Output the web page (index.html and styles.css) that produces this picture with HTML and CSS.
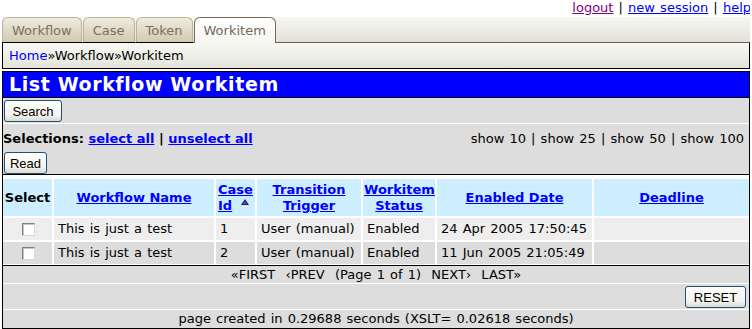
FILE: index.html
```html
<!DOCTYPE html>
<html>

<head>
    <meta charset="utf-8">
    <meta name="viewport" content="width=device-width, initial-scale=1.0">
    <title>List Workflow Workitem</title>
    <link rel="stylesheet" href="styles.css">
</head>

<body>

    <div class="toplinks">
        <a href="#" class="visited">logout</a> | <a href="#">new session</a> | <a href="#">help</a>
    </div>

    <div class="tabs">
        <a class="tab" href="#">Workflow</a>
        <a class="tab" href="#">Case</a>
        <a class="tab" href="#">Token</a>
        <a class="tab active" href="#">Workitem</a>
    </div>

    <div class="crumbs"><a href="#">Home</a>»Workflow»Workitem</div>

    <div class="main">
        <h1 class="title">List Workflow Workitem</h1>

        <div class="bar searchbar">
            <button class="btn btn-search">Search</button>
        </div>

        <div class="bar selectbar">
            <div class="selrow">
                <div class="sel"><b>Selections:</b> <a href="#">select all</a> <b>|</b> <a href="#">unselect all</a></div>
                <div class="show">show 10 | show 25 | show 50 | show 100</div>
            </div>
            <button class="btn btn-read">Read</button>
        </div>

        <div class="grid">
            <table>
                <colgroup>
                    <col style="width:49px">
                    <col style="width:160px">
                    <col style="width:39px">
                    <col style="width:104px">
                    <col style="width:72px">
                    <col style="width:155px">
                    <col style="width:155px">
                </colgroup>
                <tr>
                    <th class="plain">Select</th>
                    <th><a href="#">Workflow Name</a></th>
                    <th class="caseid"><a href="#">Case Id</a><svg class="sort" width="8" height="6" viewBox="0 0 8 6"><polygon points="4,0 8,6 0,6" fill="#1b1b70"/><polygon points="4,2 6,5 2,5" fill="#5a5aa8"/></svg></th>
                    <th><a href="#">Transition Trigger</a></th>
                    <th><a href="#">Workitem Status</a></th>
                    <th><a href="#">Enabled Date</a></th>
                    <th><a href="#">Deadline</a></th>
                </tr>
                <tr class="odd">
                    <td class="center"><input type="checkbox" class="check"></td>
                    <td>This is just a test</td>
                    <td>1</td>
                    <td>User (manual)</td>
                    <td>Enabled</td>
                    <td>24 Apr 2005 17:50:45</td>
                    <td></td>
                </tr>
                <tr class="even">
                    <td class="center"><input type="checkbox" class="check"></td>
                    <td>This is just a test</td>
                    <td>2</td>
                    <td>User (manual)</td>
                    <td>Enabled</td>
                    <td>11 Jun 2005 21:05:49</td>
                    <td></td>
                </tr>
            </table>
        </div>

        <div class="bar pager">«FIRST&nbsp; ‹PREV&nbsp; (Page 1 of 1)&nbsp; NEXT›&nbsp; LAST»</div>

        <div class="bar resetbar">
            <button class="btn btn-reset">RESET</button>
        </div>

        <div class="bar foot">page created in 0.29688 seconds (XSLT= 0.02618 seconds)</div>
    </div>

</body>

</html>
```

FILE: styles.css
```css
body {
    margin: 0 2px;
    font-family: "DejaVu Sans", Verdana, sans-serif;
    font-size: 13px;
    word-spacing: 1px;
    color: #000;
    background: #fff;
}

a {
    color: #0000ff;
}

.toplinks {
    text-align: right;
    height: 17px;
    line-height: 15px;
    margin-right: -1px;
}

.toplinks .visited {
    color: #800080;
}

.tabs {
    display: flex;
    align-items: flex-end;
    gap: 1px;
    height: 25px;
    margin: 0 -2px;
    padding: 0 2px;
    background: linear-gradient(#f7f7f3, #eeede6 45%, #e3e1d6);
    border-bottom: 1px solid #6e5d48;
}

.tab {
    display: block;
    height: 24px;
    line-height: 25px;
    padding: 0 9px;
    border: 1px solid #bcb398;
    border-bottom: 0;
    border-radius: 6px 6px 0 0;
    background: linear-gradient(#efece1, #dcd6c2 60%, #d2cbb3);
    color: #7b6f5f;
    text-decoration: none;
    box-shadow: 0 1px 0 #000;
}

.tab.active {
    position: relative;
    height: 25px;
    margin-bottom: -1px;
    border-color: #7a6a55;
    background: linear-gradient(#ffffff, #f5f5f1);
    color: #76695a;
    box-shadow: none;
}

.crumbs {
    height: 25px;
    line-height: 25px;
    padding-left: 6px;
    border: 1px solid #000;
    border-top: 0;
    background: linear-gradient(#f6f7f2, #eef0e8 50%, #e4e2d8);
}

.crumbs a {
    text-decoration: none;
}

.main {
    margin-top: 2px;
    border: 1px solid #000;
    background: #fff;
}

.title {
    margin: 0;
    height: 25px;
    line-height: 25px;
    padding-left: 6px;
    background: #0000ff;
    color: #fff;
    font-size: 19px;
    font-weight: bold;
    letter-spacing: 0.6px;
    word-spacing: 0;
    border-bottom: 1px solid #000;
}

.bar {
    background: #dddddd;
}

.btn {
    height: 22px;
    padding: 0;
    font-family: "Liberation Sans", Arial, sans-serif;
    font-size: 13px;
    word-spacing: 0;
    color: #000;
    border: 1px solid #1c5180;
    border-radius: 3px;
    background: linear-gradient(#ffffff, #f4f3ee 70%, #dcd8cc);
}

.btn-search {
    width: 58px;
}

.btn-read {
    width: 43px;
}

.btn-reset {
    width: 61px;
}

.searchbar {
    height: 25px;
    box-sizing: border-box;
    padding: 2px 0 0 1px;
    margin-bottom: 1px;
}

.selectbar {
    height: 50px;
    padding-left: 1px;
}

.selrow {
    display: flex;
    justify-content: space-between;
    align-items: center;
    height: 28px;
    padding-right: 5px;
}

.sel {
    margin-left: -1px;
    font-weight: bold;
    word-spacing: 0;
}

.grid {
    border-top: 1px solid #000;
    border-bottom: 1px solid #000;
    padding-top: 2px;
    overflow: hidden;
}

.grid table {
    table-layout: fixed;
    width: calc(100% + 4px);
    margin: 0 -2px -1px;
    border-spacing: 2px;
}

.grid th {
    height: 37px;
    box-sizing: border-box;
    padding: 2px 1px;
    line-height: 16px;
    background: #cceeff;
    text-align: center;
    vertical-align: middle;
    word-spacing: 0;
}

.grid th.caseid {
    text-align: left;
    padding-left: 2px;
}

.sort {
    margin-left: 9px;
    vertical-align: 5px;
}

.grid td {
    height: 22px;
    padding: 0 4px;
    line-height: 16px;
    white-space: nowrap;
}

.grid td.center {
    text-align: center;
}

.odd td {
    background: #eeeeee;
}

.even td {
    background: #dddddd;
}

.check {
    appearance: none;
    width: 13px;
    height: 13px;
    margin: 0 0 0 1px;
    vertical-align: middle;
    border: 1px solid;
    border-color: #808080 #d8d8d8 #d8d8d8 #808080;
    background: #fff;
    box-shadow: inset 1px 1px 0 #c4c4c4;
}

.pager {
    height: 17px;
    line-height: 17px;
    text-align: center;
    margin-bottom: 1px;
}

.resetbar {
    height: 25px;
    box-sizing: border-box;
    padding: 2px 3px 0 0;
    text-align: right;
    margin-bottom: 1px;
}

.foot {
    height: 18px;
    line-height: 18px;
    text-align: center;
}
```
